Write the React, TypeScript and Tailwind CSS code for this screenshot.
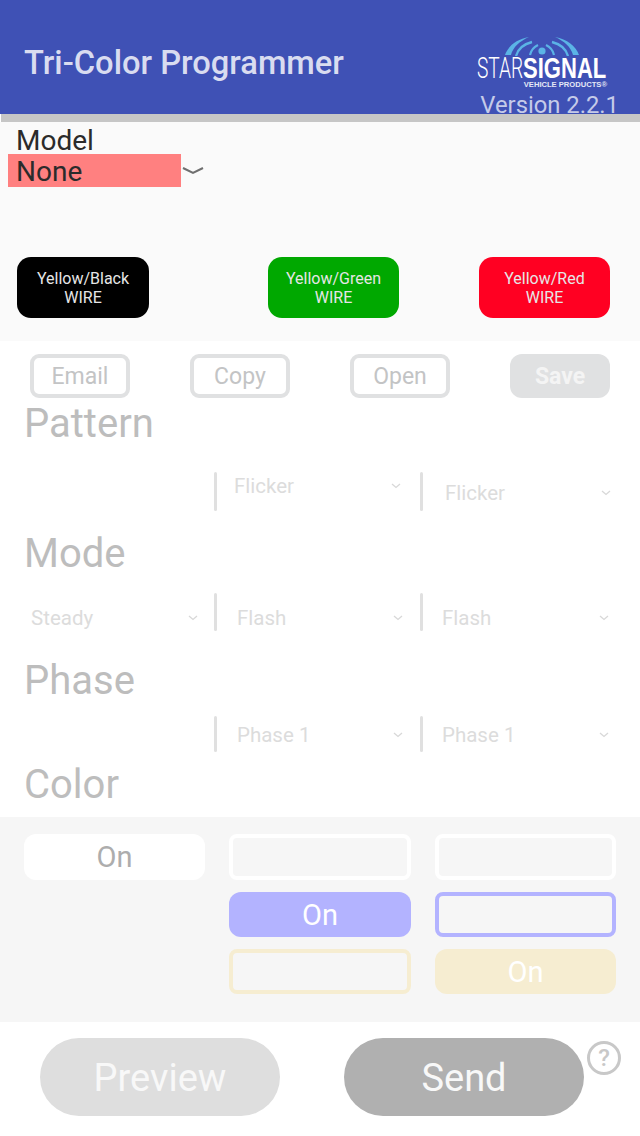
const roboto = "font-['Roboto',sans-serif]";

function Wire({ color, label, width, className = "" }: { color: string; label: string; width: string; className?: string }) {
  return (
    <div className={`h-[61px] rounded-[14px] flex flex-col items-center justify-center text-[16px] leading-[19px] text-[#e6e6e6] ${width} ${color} ${className}`}>
      <span>{label}</span>
      <span>WIRE</span>
    </div>
  );
}

function Logo() {
  return (
    <div className="w-[130px] mr-[10px] flex flex-col items-center">
      <svg width="76" height="20" viewBox="0 0 76 20" fill="none" className="shrink-0">
        <circle cx="38" cy="15" r="3.6" fill="#5bb4e6" />
        <path d="M26 19 C27 14 30 11 34 9 M50 19 C49 14 46 11 42 9" stroke="#5bb4e6" strokeWidth="2.2" />
        <path d="M12 20 C14 13 20 8 28 6 M64 20 C62 13 56 8 48 6" stroke="#5bb4e6" strokeWidth="2.4" />
        <path d="M1 19 C4 10 13 3 25 1 C16 5 9 11 7 19 Z M75 19 C72 10 63 3 51 1 C60 5 67 11 69 19 Z" fill="#5bb4e6" />
      </svg>
      <div className="h-[24px] w-[130px] flex items-center whitespace-nowrap text-white text-[29px] leading-[24px]">
        <div className="w-[46px] shrink-0">
          <span className="inline-block origin-left scale-x-[0.66] font-light font-['Roboto',sans-serif]">STAR</span>
        </div>
        <div className="w-[84px] shrink-0">
          <span className="inline-block origin-left scale-x-[0.76] font-bold font-['Liberation_Sans',sans-serif]">SIGNAL</span>
        </div>
      </div>
      <div className="self-end h-[9px] font-['Liberation_Sans',sans-serif] font-bold text-[7.6px] leading-[9px] text-[#e4e8f6] whitespace-nowrap">VEHICLE PRODUCTS®</div>
    </div>
  );
}

function Outline({ label }: { label: string }) {
  return (
    <div className="w-[100px] h-[44px] pt-[2px] rounded-[9px] border-[4px] border-[#e0e1e2] flex items-center justify-center text-[23px] text-[#c3c4c5]">
      {label}
    </div>
  );
}

function Chevron() {
  return (
    <svg width="10" height="6" viewBox="0 0 10 6" fill="none" className="shrink-0">
      <path d="M1 1 L5 4.5 L9 1" stroke="#d8d8d8" strokeWidth="1.3" />
    </svg>
  );
}

function Select({ label, className }: { label: string; className: string }) {
  return (
    <div className={`flex items-center h-[24px] text-[20.5px] leading-[24px] text-[#dcdcdc] ${className}`}>
      <span className="flex-1">{label}</span>
      <Chevron />
    </div>
  );
}

function Heading({ children, className = "" }: { children: string; className?: string }) {
  return <div className={`pl-[24px] text-[40px] leading-[44px] text-[#bdbdbd] ${className}`}>{children}</div>;
}

function Divider() {
  return <div className="w-[3px] h-full rounded-full bg-[#e0e0e0] shrink-0" />;
}

function Toggle({ kind }: { kind: string }) {
  const on = "rounded-[12px] flex items-center justify-center pt-[2px] text-[29px]";
  const off = "rounded-[8px] border-[4px]";
  if (kind === "white-on") return <div className={`${on} bg-white text-[#adadad]`}>On</div>;
  if (kind === "white-off") return <div className={`${off} border-white`} />;
  if (kind === "blue-on") return <div className={`${on} bg-[#b3b3ff] text-white`}>On</div>;
  if (kind === "blue-off") return <div className={`${off} border-[#b3b3ff]`} />;
  if (kind === "yellow-on") return <div className={`${on} bg-[#f6edd1] text-white`}>On</div>;
  if (kind === "yellow-off") return <div className={`${off} border-[#f6edd1]`} />;
  return <div />;
}

export default function App() {
  return (
    <div className={`w-[640px] h-[1136px] bg-white overflow-hidden ${roboto}`}>
      <header className="h-[114px] bg-[#3f51b5] flex items-start justify-between pl-[24px] pr-[23px] pt-[36px]">
        <h1 className="mt-[4px] text-[32.7px] leading-[46px] font-medium text-[#d9dcf0] whitespace-nowrap">Tri-Color Programmer</h1>
        <div className="flex flex-col items-end">
          <Logo />
          <div className="mt-[4px] -mr-[2px] text-[23.8px] leading-[24px] text-[#c5cbe9] whitespace-nowrap">Version 2.2.1</div>
        </div>
      </header>
      <div className="h-[8px] ml-[1px] bg-[#c6c6c6]" />

      <section className="h-[219px] bg-[#fafafa] text-[#2b2b2b]">
        <div className="pl-[16px] pt-[5px] text-[28px] leading-[27px]">Model</div>
        <div className="flex items-center pl-[8px]">
          <div className="w-[173px] h-[33px] pl-[8px] pt-[1px] bg-[#ff8080] text-[28px] leading-[33px]">None</div>
          <svg width="22" height="10" viewBox="0 0 22 10" fill="none" className="ml-[1px]">
            <path d="M1 2 Q11 7 11 7 Q11 7 21 2" stroke="#6f6f6f" strokeWidth="2" />
          </svg>
        </div>
        <div className="flex pl-[17px] mt-[70px]">
          <Wire color="bg-black" width="w-[132px]" label="Yellow/Black" />
          <Wire color="bg-[#00a800]" width="w-[131px]" label="Yellow/Green" className="ml-[119px]" />
          <Wire color="bg-[#ff0022]" width="w-[131px]" label="Yellow/Red" className="ml-[80px]" />
        </div>
      </section>

      <section className="h-[476px]">
        <div className="flex justify-between px-[30px] pt-[13px]">
          <Outline label="Email" />
          <Outline label="Copy" />
          <Outline label="Open" />
          <div className="w-[100px] h-[44px] pt-[2px] rounded-[12px] bg-[#e0e1e2] flex items-center justify-center text-[23px] font-bold text-[#f4f4f4]">Save</div>
        </div>

        <Heading className="mt-[4px]">Pattern</Heading>
        <div className="flex h-[39px] mt-[26px] pl-[214px]">
          <Divider />
          <Select label="Flicker" className="w-[203px] mt-[2px] pl-[17px] pr-[19px]" />
          <Divider />
          <Select label="Flicker" className="w-[217px] mt-[9px] pl-[22px] pr-[29px]" />
        </div>

        <Heading className="mt-[21px]">Mode</Heading>
        <div className="flex h-[38px] mt-[17px] pl-[31px]">
          <Select label="Steady" className="w-[183px] mt-[13px] pr-[16px]" />
          <Divider />
          <Select label="Flash" className="w-[203px] mt-[13px] pl-[20px] pr-[17px]" />
          <Divider />
          <Select label="Flash" className="w-[217px] mt-[13px] pl-[19px] pr-[31px]" />
        </div>

        <Heading className="mt-[28px]">Phase</Heading>
        <div className="flex h-[36px] mt-[13px] pl-[214px]">
          <Divider />
          <Select label="Phase 1" className="w-[203px] mt-[7px] pl-[20px] pr-[17px]" />
          <Divider />
          <Select label="Phase 1" className="w-[217px] mt-[7px] pl-[19px] pr-[31px]" />
        </div>

        <Heading className="mt-[11px]">Color</Heading>
      </section>

      <section className="h-[205px] bg-[#f6f6f6] pt-[17px] pl-[24px]">
        <div className="grid grid-cols-[181px_182px_181px] grid-rows-[46px_45px_45px] gap-x-[24px] gap-y-[12px]">
          <Toggle kind="white-on" />
          <Toggle kind="white-off" />
          <Toggle kind="white-off" />
          <Toggle kind="empty" />
          <Toggle kind="blue-on" />
          <Toggle kind="blue-off" />
          <Toggle kind="empty" />
          <Toggle kind="yellow-off" />
          <Toggle kind="yellow-on" />
        </div>
      </section>

      <footer className="relative flex pl-[40px] pt-[16px] gap-[64px]">
        <div className="w-[240px] h-[78px] pt-[2px] rounded-full bg-[#dedede] flex items-center justify-center text-[38px] text-[#f8f8f8]">Preview</div>
        <div className="w-[240px] h-[78px] pt-[2px] rounded-full bg-[#b0b0b0] flex items-center justify-center text-[38px] text-[#f8f8f8]">Send</div>
        <div className="absolute left-[587px] top-[19px] w-[34px] h-[34px] rounded-full border-[3px] border-[#c8c8c8] flex items-center justify-center text-[24px] font-medium text-[#c8c8c8]">?</div>
      </footer>
    </div>
  );
}
